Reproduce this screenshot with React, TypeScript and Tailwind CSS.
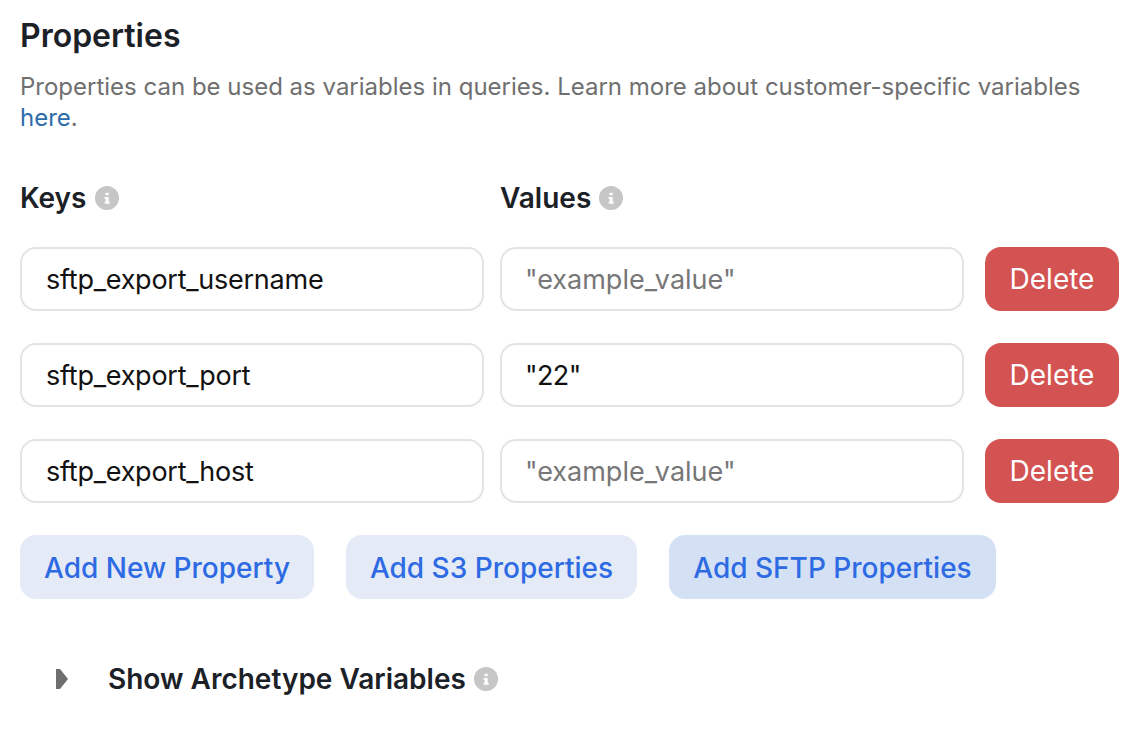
function InfoDot() {
  return (
    <span className="inline-flex h-6 w-6 items-center justify-center rounded-full bg-[#c6c6c6] text-white">
      <svg viewBox="0 0 24 24" className="h-4 w-4" fill="currentColor">
        <rect x="10" y="4" width="4.5" height="4" rx="1" />
        <path d="M8.5 10.5h6v7h1.5v3H8.5v-3H10v-4H8.5z" />
      </svg>
    </span>
  );
}

const rows = [
  { key: "sftp_export_username", value: "", id: 1 },
  { key: "sftp_export_port", value: '"22"', id: 2 },
  { key: "sftp_export_host", value: "", id: 3 },
];

export default function App() {
  return (
    <div className="h-[734px] w-[1142px] overflow-hidden bg-white pl-5 pt-[18px] font-['Inter',sans-serif] text-[#1c2127]">
      <h2 className="text-[32px] leading-9 font-semibold">Properties</h2>
      <p className="mt-[17px] w-[1090px] text-[24px] leading-[31px] text-[#6f6f6f]">
        Properties can be used as variables in queries. Learn more about customer-specific variables{" "}
        <span className="text-[#2d6ca8]">here</span>.
      </p>
      <div className="mt-[49px] flex items-center text-[28px] font-semibold leading-8">
        <div className="flex w-[480px] items-center gap-[9px]">
          Keys <InfoDot />
        </div>
        <div className="flex items-center gap-[8px]">
          Values <InfoDot />
        </div>
      </div>
      <div className="mt-[33px] flex flex-col gap-8">
        {rows.map((row) => (
          <div key={row.id} className="flex items-center">
            <input
              readOnly
              value={row.key}
              className="h-16 w-[464px] rounded-2xl border-2 border-[#e3e3e3] px-6 text-[27px] tracking-[-0.25px] text-[#111111] outline-none"
            />
            <input
              readOnly
              value={row.value}
              placeholder='"example_value"'
              className="ml-4 h-16 w-[464px] rounded-2xl border-2 border-[#e3e3e3] pl-[23px] pr-6 text-[27px] tracking-[-0.6px] text-[#111111] outline-none placeholder:tracking-normal placeholder:text-[#777777]"
            />
            <button className="ml-[21px] h-16 w-[134px] rounded-2xl bg-[#d35352] text-[28px] text-white">
              Delete
            </button>
          </div>
        ))}
      </div>
      <div className="mt-8 flex gap-8 text-[28px] font-medium text-[#2d6ae3]">
        <button className="h-16 w-[294px] rounded-2xl bg-[#e4ebf7] pt-px">Add New Property</button>
        <button className="h-16 w-[291px] rounded-2xl bg-[#e4ebf7] pt-px">Add S3 Properties</button>
        <button className="h-16 w-[327px] rounded-2xl bg-[#d4e1f5] pt-px">Add SFTP Properties</button>
      </div>
      <div className="mt-16 flex items-center text-[28px] font-semibold leading-8">
        <svg viewBox="0 0 12 20" className="ml-9 h-5 w-3" fill="#6f6f6f">
          <path d="M0 0h4l8 10-8 10H0z" />
        </svg>
        <span className="ml-10">Show Archetype Variables</span>
        <span className="ml-2 inline-flex"><InfoDot /></span>
      </div>
    </div>
  );
}
